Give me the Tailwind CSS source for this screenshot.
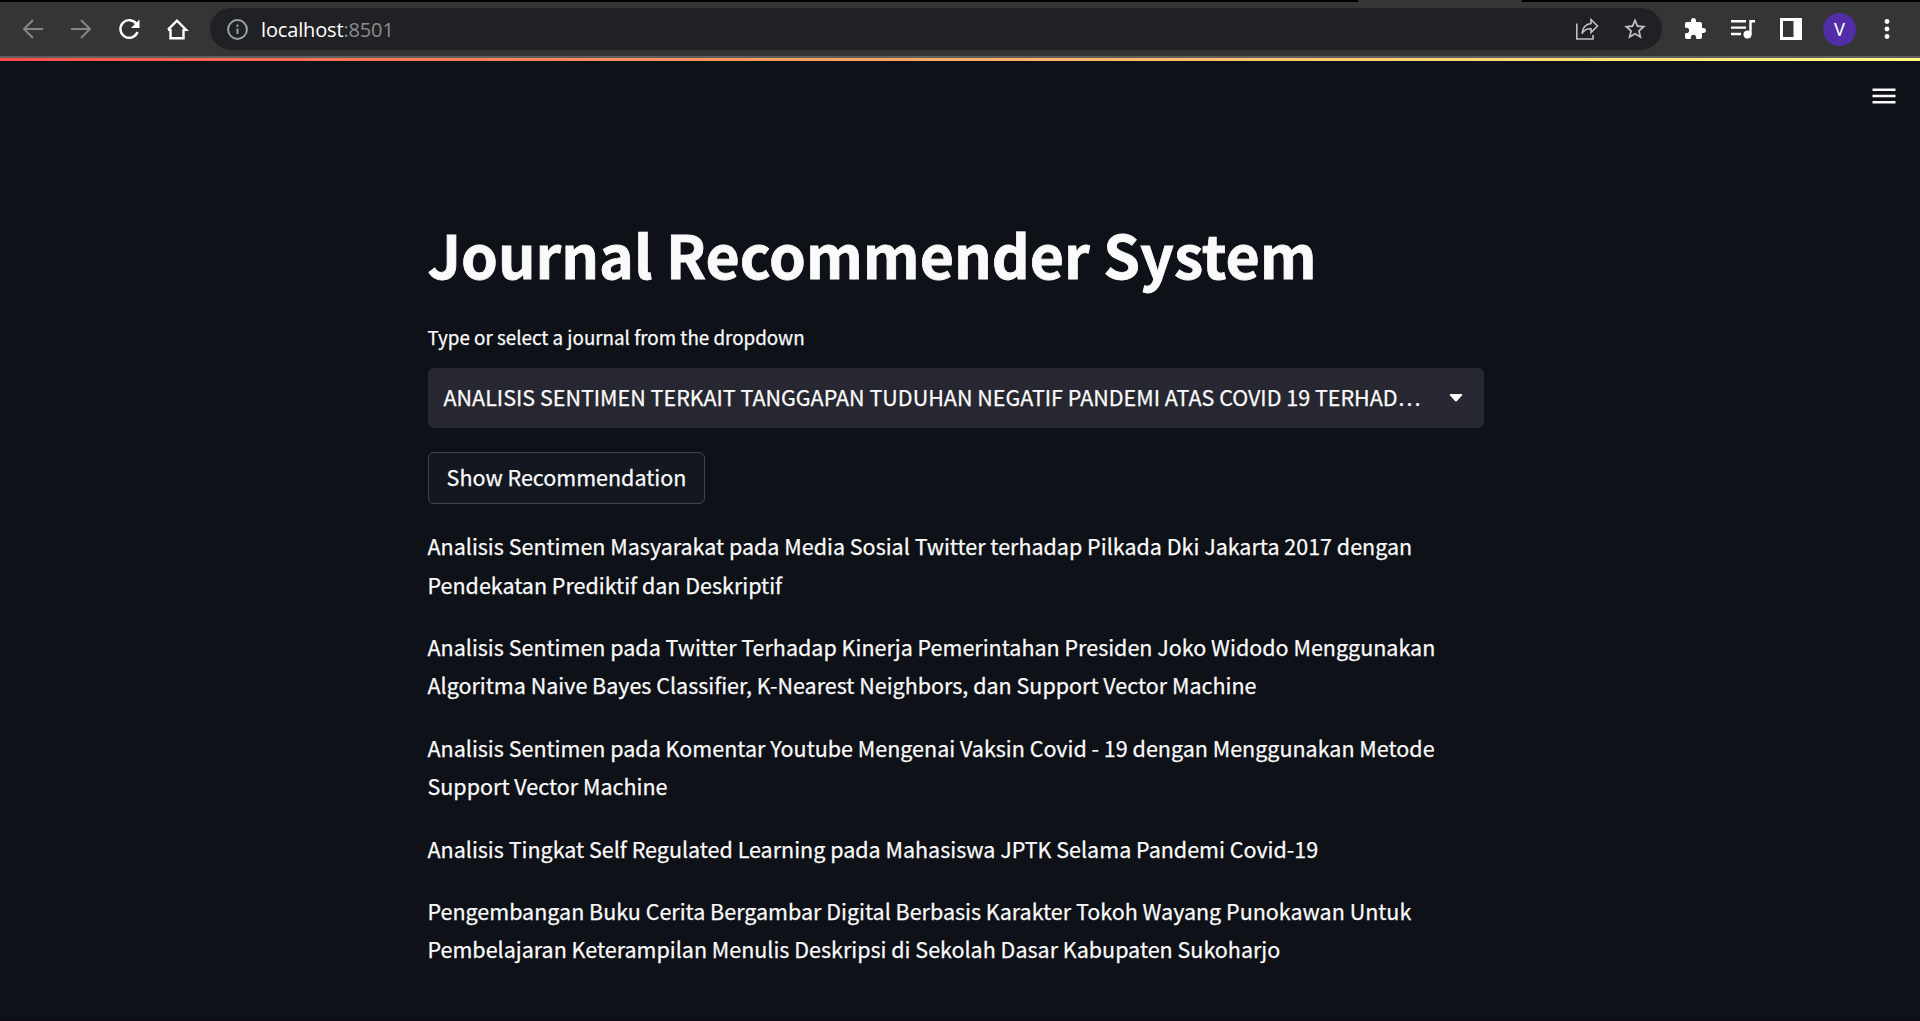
<!DOCTYPE html>
<html lang="id">
<head>
<meta charset="utf-8">
<title>Journal Recommender System</title>
<script src="https://cdn.jsdelivr.net/npm/@tailwindcss/browser@4"></script>
</head>
<body class="flex h-[1021px] w-[1920px] flex-col overflow-hidden bg-[#0e1117] font-['Noto_Sans_CJK_SC','Noto_Sans_CJK_JP',sans-serif] text-[#fafafa]">
<div class="flex h-[2px] shrink-0 bg-black"><div class="ml-[1358px] h-[2px] w-[164px] bg-[#353535]"></div></div>
<header class="flex h-[56px] shrink-0 items-center border-b-2 border-[#5f5f5f] bg-[#353535] text-white">
  <div class="flex w-[210px] shrink-0 items-center gap-[22px] pl-5">
    <svg class="size-[26px] text-[#868686]" viewBox="0 0 26 26" fill="none" stroke="currentColor" stroke-width="2"><path d="M23 13H4.500M13 4l-9 9 9 9"/></svg>
    <svg class="size-[26px] text-[#868686]" viewBox="0 0 26 26" fill="none" stroke="currentColor" stroke-width="2"><path d="M3 13h18.500M13 4l9 9-9 9"/></svg>
    <svg class="size-[26px]" viewBox="0 0 26 26" fill="none" stroke="currentColor" stroke-width="2.400"><path d="M20.500 8A8.800 8.800 0 1 0 21.500 16"/><path d="M23.500 3.500v8.500h-8.500z" fill="currentColor" stroke="none"/></svg>
    <svg class="size-[26px]" viewBox="0 0 26 26" fill="none" stroke="currentColor" stroke-width="2.400"><path d="M6.500 13v9.300h13V13M4 13.700l9-9 9 9h-2.500M4 13.700h2.500"/></svg>
  </div>
  <div class="flex h-[42px] w-[1452px] shrink-0 items-center rounded-full bg-[#202124] pr-[14px] pl-[16px]">
    <svg class="size-[24px] text-[#9aa0a6]" viewBox="0 0 24 24" fill="none" stroke="currentColor" stroke-width="2"><circle cx="11.500" cy="12.500" r="9.400"/><path d="M11.500 11.500v5.500M11.500 7.500v2.200"/></svg>
    <div class="ml-[11px] pt-px font-['Open_Sans',sans-serif] text-[20px] leading-[28px] tracking-[-0.15px] text-[#8b8c8e]"><span class="text-white">localhost</span><span>:8501</span></div>
    <div class="ml-auto flex items-center gap-[22px] text-[#c0c1c3]">
      <svg class="size-[26px]" viewBox="0 0 26 26" fill="none" stroke="currentColor" stroke-width="1.600"><path d="M2.800 7.500v15.500H19V19"/><path d="M17 3.500l6.500 6.500-6.500 6.500v-3.700c-4.500-.2-7 1.500-9 4.700.5-5 3.500-9.300 9-10z"/></svg>
      <svg class="size-[26px]" viewBox="0 0 24 24" fill="currentColor"><path d="M22 9.240l-7.190-.62L12 2 9.190 8.630 2 9.240l5.460 4.730L5.820 21 12 17.270 18.180 21l-1.630-7.030L22 9.240zM12 15.400l-3.760 2.270 1-4.280-3.320-2.880 4.380-.38L12 6.100l1.710 4.040 4.380.38-3.320 2.880 1 4.280L12 15.400z"/></svg>
    </div>
  </div>
  <div class="flex flex-1 items-center pl-[21px]">
    <svg class="size-[24px]" viewBox="0 0 24 24" fill="currentColor"><path d="M20.500 11H19V7c0-1.100-.9-2-2-2h-4V3.500C13 2.120 11.880 1 10.500 1S8 2.120 8 3.500V5H4c-1.100 0-1.990.9-1.990 2v3.800H3.500c1.490 0 2.700 1.210 2.700 2.700s-1.210 2.700-2.700 2.700H2V20c0 1.100.9 2 2 2h3.800v-1.500c0-1.490 1.210-2.700 2.700-2.700 1.490 0 2.700 1.210 2.700 2.700V22H17c1.100 0 2-.9 2-2v-4h1.500c1.380 0 2.500-1.120 2.500-2.500S21.880 11 20.500 11z"/></svg>
    <svg class="ml-[24px] h-[26px] w-[26px]" viewBox="0 0 26 26" fill="none" stroke="currentColor" stroke-width="2.400"><path d="M0 5.200h15M0 11.600h15M0 18h10"/><path d="M19.500 18V5.200H24"/><circle cx="16.500" cy="18.500" r="2.900" fill="currentColor"/></svg>
    <svg class="ml-[21px] size-[26px]" viewBox="0 0 26 26"><path d="M2 2h22v22H2zM5 5v16h10.500V5z" fill="currentColor" fill-rule="evenodd"/></svg>
    <div class="ml-[19px] flex size-[33px] items-center justify-center rounded-full bg-[#512da8] pt-px font-['Roboto',sans-serif] text-[18px] leading-none">V</div>
    <svg class="ml-[18px] size-[26px]" viewBox="0 0 26 26" fill="currentColor"><circle cx="13" cy="5.500" r="2.400"/><circle cx="13" cy="13" r="2.400"/><circle cx="13" cy="20.500" r="2.400"/></svg>
  </div>
</header>
<div class="h-[3px] shrink-0 bg-linear-to-r from-[#ff4b4b] to-[#fffd80]"></div>
<div class="flex h-[70px] shrink-0 justify-end pt-[21px] pr-[18px]">
  <svg class="h-[28px] w-[36px]" viewBox="0 0 36 28" fill="none" stroke="currentColor" stroke-width="2.500"><path d="M6.500 7.800h23M6.500 14h23M6.500 20.300h23"/></svg>
</div>
<main class="ml-[428px] w-[1056px] flex-1">
  <h1 class="mt-[83px] -ml-[0.5px] h-[79px] text-[59px] leading-[79px] font-bold whitespace-nowrap [-webkit-text-stroke:0.8px_#fafafa]">Journal Recommender System</h1>
  <div class="mt-[28px] -ml-[0.5px] h-[32px] text-[18.8px] leading-[32px] [-webkit-text-stroke:0.25px_#fafafa]">Type or select a journal from the dropdown</div>
  <div class="mt-[15px] flex h-[60px] items-center rounded-[6px] bg-[#262730] pl-[15.5px] text-[21.5px] whitespace-nowrap [-webkit-text-stroke:0.25px_#fafafa]">
    <span class="pb-[2px]">ANALISIS SENTIMEN TERKAIT TANGGAPAN TUDUHAN NEGATIF PANDEMI ATAS COVID 19 TERHAD…</span>
    <svg class="mr-[21px] ml-auto h-[8px] w-[14px]" viewBox="0 0 14 8" fill="currentColor"><path d="M1.500 0h11q1.500.3.500 1.500L8 7q-1 1-2 0L1 1.500Q0 .3 1.500 0z"/></svg>
  </div>
  <button class="mt-6 flex h-[52px] w-[277px] items-center justify-center rounded-[6px] border border-[#41444c] bg-[#131720] pb-[2px] text-[21.5px] whitespace-nowrap [-webkit-text-stroke:0.25px_#fafafa]">Show Recommendation</button>
  <div class="mt-[23.2px] -ml-[0.5px] flex flex-col gap-6 text-[21.5px] leading-[38.4px] whitespace-nowrap [-webkit-text-stroke:0.25px_#fafafa]">
    <p>Analisis Sentimen Masyarakat pada Media Sosial Twitter terhadap Pilkada Dki Jakarta 2017 dengan<br>Pendekatan Prediktif dan Deskriptif</p>
    <p>Analisis Sentimen pada Twitter Terhadap Kinerja Pemerintahan Presiden Joko Widodo Menggunakan<br>Algoritma Naive Bayes Classifier, K-Nearest Neighbors, dan Support Vector Machine</p>
    <p>Analisis Sentimen pada Komentar Youtube Mengenai Vaksin Covid - 19 dengan Menggunakan Metode<br>Support Vector Machine</p>
    <p>Analisis Tingkat Self Regulated Learning pada Mahasiswa JPTK Selama Pandemi Covid-19</p>
    <p>Pengembangan Buku Cerita Bergambar Digital Berbasis Karakter Tokoh Wayang Punokawan Untuk<br>Pembelajaran Keterampilan Menulis Deskripsi di Sekolah Dasar Kabupaten Sukoharjo</p>
  </div>
</main>
<div class="h-[2px] shrink-0 bg-[#100a17]"></div>
</body>
</html>
